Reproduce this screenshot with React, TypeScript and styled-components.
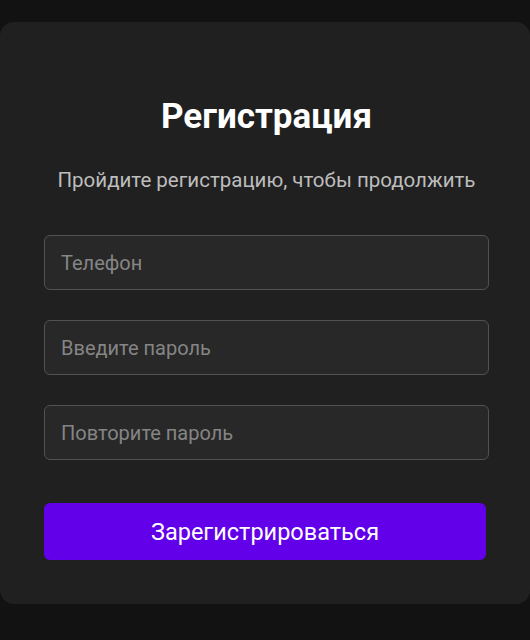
import React from 'react';
import styled, { createGlobalStyle } from 'styled-components';

const GlobalStyle = createGlobalStyle`
  html, body {
    margin: 0;
    padding: 0;
    background: #121212;
    font-family: Roboto, 'Noto Sans', sans-serif;
  }
  * {
    box-sizing: border-box;
  }
`;

const Page = styled.main`
  min-height: 640px;
  padding-top: 22px;
  background: #121212;
`;

const Card = styled.form`
  width: 530px;
  background: #202020;
  border-radius: 14px;
  padding: 74px 41px 44px 44px;
  display: flex;
  flex-direction: column;
`;

const Title = styled.h1`
  margin: 0;
  text-align: center;
  color: #ffffff;
  font-size: 35px;
  font-weight: 700;
  line-height: 42px;
`;

const Subtitle = styled.p`
  margin: 29px 0 42px;
  text-align: center;
  color: #bdbdbd;
  font-size: 20.5px;
  line-height: 26px;
`;

const Fields = styled.div`
  display: flex;
  flex-direction: column;
  gap: 30px;
`;

const Input = styled.input`
  width: 100%;
  height: 55px;
  padding: 0 16px;
  background: #282828;
  border: 1px solid #525252;
  border-radius: 6px;
  color: #e0e0e0;
  font-family: inherit;
  font-size: 20px;
  outline: none;

  &::placeholder {
    color: #858585;
  }
`;

const SubmitButton = styled.button`
  margin-top: 43px;
  width: calc(100% - 3px);
  height: 57px;
  border: none;
  border-radius: 6px;
  background: #6200ea;
  color: #ffffff;
  font-family: inherit;
  font-size: 23.5px;
  cursor: pointer;
`;

export default function App() {
  return (
    <>
      <GlobalStyle />
      <Page>
        <Card onSubmit={(e) => e.preventDefault()}>
          <Title>Регистрация</Title>
          <Subtitle>Пройдите регистрацию, чтобы продолжить</Subtitle>
          <Fields>
            <Input type="tel" placeholder="Телефон" />
            <Input type="password" placeholder="Введите пароль" />
            <Input type="password" placeholder="Повторите пароль" />
          </Fields>
          <SubmitButton type="submit">Зарегистрироваться</SubmitButton>
        </Card>
      </Page>
    </>
  );
}
